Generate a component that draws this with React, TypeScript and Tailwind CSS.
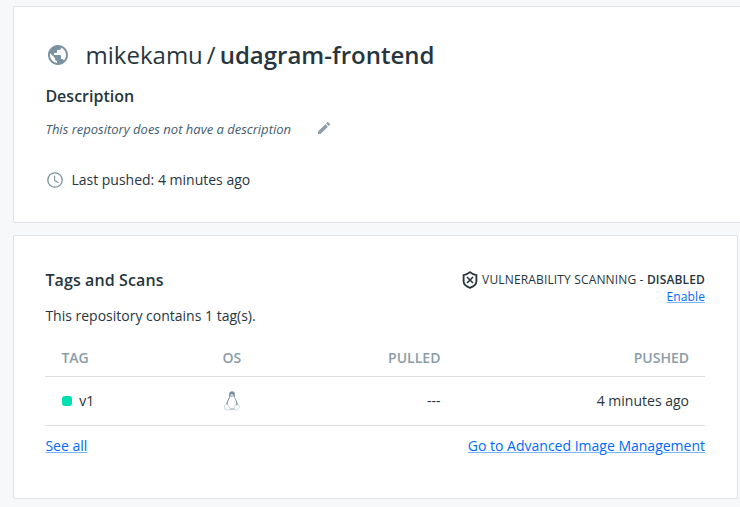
import React from "react";
import { MdEdit, MdPublic } from "react-icons/md";

function ClockIcon() {
  return (
    <svg className="mb-px h-4 w-4 shrink-0" viewBox="0 0 16 16" fill="none" stroke="#7a929f">
      <circle cx="8" cy="8" r="7.2" strokeWidth="1.3" />
      <path d="M7.6 3.8V8.4L11.4 10.8" strokeWidth="1.1" />
    </svg>
  );
}

function ShieldIcon() {
  return (
    <svg className="h-[18px] w-4 shrink-0" viewBox="0 0 16 18" fill="none" stroke="#27363e">
      <path d="M8 1.2C6.3 2.7 3.9 3.8 1.6 4.1V10.5C1.6 13.3 4.7 15.5 8 16.8C11.3 15.5 14.4 13.3 14.4 10.5V4.1C12.1 3.8 9.7 2.7 8 1.2Z" strokeWidth="1.8" />
      <path d="M5 6L11 12M11 6L5 12" strokeWidth="1.6" />
    </svg>
  );
}

function PenguinIcon() {
  return (
    <svg className="h-5 w-4" viewBox="0 0 16 20">
      <path d="M8 .3C5.9.3 5 1.7 5.1 3.5C5.2 6 4.9 7 3.8 8.7C2.9 10.2 2.3 12 2.2 14L5 17.5H11.2L13.9 13.6C13.6 11.7 12.9 10 12 8.7C10.9 7.1 10.9 5.8 10.9 3.5C10.9 1.5 10.1.3 8 .3Z" fill="#7b919d" />
      <path d="M6 5.2L8 6L10 5.1C10.2 7.4 11.8 9.4 12.2 11.5C12.6 13.7 11.5 16 10.5 17.5H5.4C4.2 15.6 3.4 13.7 3.8 11.5C4.3 9.2 6 7.5 6 5.2Z" fill="#fff" />
      <path d="M5.9 3.9L7.9 3.2L10 4L8 5.4Z" fill="#e5eaed" />
      <path d="M.6 14.4L2.8 13L5 15.1L6.1 17.5C6 19 4.7 19.3 3.4 19L.7 18Z" fill="#fff" stroke="#aebcc4" strokeWidth=".6" />
      <path d="M11 14L12.5 14.2L14 13L15.6 16.4L13.2 18.6C11.8 19.5 10.5 19.2 10.3 17.8Z" fill="#fff" stroke="#aebcc4" strokeWidth=".6" />
      <path d="M6 18.2H10.2" stroke="#7b919d" strokeWidth=".7" />
    </svg>
  );
}

const linkClass =
  "text-[#0069ff] underline decoration-[#78b6ff] decoration-1 underline-offset-1";

export default function App() {
  return (
    <main className="h-[507px] w-[740px] overflow-hidden bg-[#f7f8fa] pl-[13px] pt-[6px] font-['Open_Sans',sans-serif] text-sm text-[#27363e]">
      <section className="h-[217px] w-[760px] rounded-[2px] border border-[#e1e2e6] bg-white pl-[31.4px] pt-8">
        <h1 className="flex h-8 items-center text-2xl leading-8">
          <MdPublic className="ml-[0.6px] h-6 w-6 text-[#7a929f]" />
          <span className="ml-[15.6px]">mikekamu</span>
          <span className="mx-1">/</span>
          <span className="font-semibold">udagram-frontend</span>
        </h1>
        <h2 className="mt-[13px] h-6 text-base font-semibold leading-6">Description</h2>
        <div className="mt-[11px] flex h-5 items-center">
          <p className="text-[13px] italic leading-5 text-[#445d6e]">This repository does not have a description</p>
          <MdEdit className="mb-[2px] ml-[25px] h-4 w-4 text-[#8b9da8]" />
        </div>
        <div className="mt-[31px] flex h-5 items-center pl-[1.6px]">
          <ClockIcon />
          <span className="ml-[8.4px] leading-5">Last pushed: 4 minutes ago</span>
        </div>
      </section>

      <section className="mt-3 h-[264px] w-[725px] rounded-[2px] border border-[#e1e2e6] bg-white pl-[31.4px] pr-8 pt-8">
        <header className="flex h-10 justify-between">
          <h2 className="text-base font-semibold leading-6 tracking-[0.11px]">Tags and Scans</h2>
          <div className="text-right text-xs">
            <div className="flex h-6 items-center">
              <ShieldIcon />
              <span className="ml-1 whitespace-pre tracking-[0.15px]">VULNERABILITY SCANNING - <strong className="font-semibold">DISABLED</strong></span>
            </div>
            <a className={linkClass + " block leading-[10px] tracking-[0.1px]"}>Enable</a>
          </div>
        </header>
        <p className="mt-[-2px] h-5 leading-5">This repository contains 1 tag(s).</p>
        <table className="mt-[14px] w-full table-fixed border-separate border-spacing-0">
          <colgroup>
            <col className="w-[161px]" />
            <col className="w-[98px]" />
            <col className="w-[152px]" />
            <col />
          </colgroup>
          <thead>
            <tr className="text-[#8b9da8]">
              <th className="h-[37px] border-b border-[#dddfe1] px-4 py-0 text-left font-semibold">TAG</th>
              <th className="border-b border-[#dddfe1] px-4 py-0 text-left font-semibold">OS</th>
              <th className="border-b border-[#dddfe1] px-4 py-0 text-right font-semibold">PULLED</th>
              <th className="border-b border-[#dddfe1] px-4 py-0 text-right font-semibold">PUSHED</th>
            </tr>
          </thead>
          <tbody>
            <tr>
              <td className="h-[49px] border-b border-[#dddfe1] px-4 py-0">
                <div className="flex items-center"><span className="ml-[0.6px] mr-[7.2px] h-[10px] w-[10px] rounded-[3px] bg-[#00e0b2]" />v1</div>
              </td>
              <td className="border-b border-[#dddfe1] px-[17.6px] py-0"><PenguinIcon /></td>
              <td className="border-b border-[#dddfe1] px-4 py-0 text-right">---</td>
              <td className="border-b border-[#dddfe1] px-4 py-0 text-right">4 minutes ago</td>
            </tr>
          </tbody>
        </table>
        <nav className="mt-[10px] flex justify-between leading-5">
          <a className={linkClass}>See all</a>
          <a className={linkClass}>Go to Advanced Image Management</a>
        </nav>
      </section>
    </main>
  );
}
